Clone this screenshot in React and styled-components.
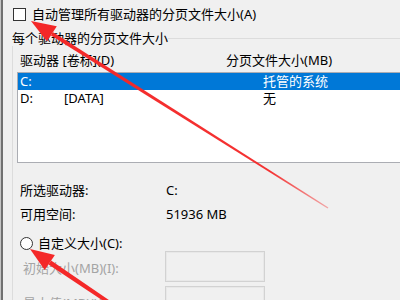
import React from "react";
import styled, { createGlobalStyle } from "styled-components";

const Global = createGlobalStyle`
  html, body { margin: 0; padding: 0; background: #f0f0f0; }
  * { box-sizing: border-box; }
`;

const Page = styled.div`
  position: relative;
  width: 400px;
  height: 300px;
  overflow: hidden;
  background: #f0f0f0;
  box-shadow: inset 1px 0 0 #c4c4c4, inset 3px 0 0 #707070;
  padding-top: 7px;
  font-family: "Noto Sans", "Noto Sans CJK SC", sans-serif;
  font-size: 13px;
  color: #000;
`;

const CheckRow = styled.div`
  display: flex;
  align-items: center;
  gap: 6px;
  margin-left: 13px;
  height: 15px;
  line-height: 15px;
  white-space: nowrap;
`;

const CheckBox = styled.span`
  width: 13px;
  height: 13px;
  border: 1px solid #333;
  background: #fff;
  flex: none;
`;

const Group = styled.fieldset`
  margin: 8px -80px 0 12px;
  padding: 0;
  border: 1px solid #dcdcdc;
  min-width: 0;
`;

const Legend = styled.legend`
  padding: 0;
  margin-left: -1px;
  line-height: 16px;
  white-space: nowrap;
`;

const HeaderRow = styled.div`
  display: flex;
  margin-top: 6px;
  padding-left: 7px;
  height: 16px;
  line-height: 16px;
  white-space: nowrap;
`;

const HeaderCol = styled.span`
  width: ${(p) => p.$w || "auto"};
  flex: none;
`;

const List = styled.div`
  margin: 4px 0 0 4px;
  height: 91px;
  border: 1px solid #abadb3;
  background: #fff;
`;

const ListRow = styled.div`
  display: grid;
  grid-template-columns: 44px 199px 1fr;
  height: 17px;
  line-height: 17px;
  padding-left: 2px;
  white-space: nowrap;
  background: ${(p) => (p.$selected ? "#0078d7" : "transparent")};
  color: ${(p) => (p.$selected ? "#fff" : "#000")};
`;

const InfoRow = styled.div`
  display: flex;
  padding-left: 7px;
  height: 18px;
  line-height: 18px;
  margin-top: ${(p) => p.$mt || 0}px;
  white-space: nowrap;
`;

const InfoLabel = styled.span`
  width: 146px;
  flex: none;
`;

const RadioRow = styled.div`
  display: flex;
  align-items: center;
  gap: 5px;
  margin-top: 12px;
  padding-left: 7px;
  height: 16px;
  line-height: 16px;
  white-space: nowrap;
`;

const Radio = styled.span`
  width: 13px;
  height: 13px;
  border-radius: 50%;
  border: 1px solid #333;
  background: #fff;
  flex: none;
`;

const FieldRow = styled.div`
  display: flex;
  align-items: center;
  padding-left: 10px;
  height: 31px;
  margin-top: ${(p) => p.$mt || 0}px;
  white-space: nowrap;
`;

const FieldLabel = styled.span`
  width: 142px;
  flex: none;
  color: #a4a4a4;
  line-height: 16px;
  padding-top: 2px;
`;

const Input = styled.span`
  width: 100px;
  height: 31px;
  border: 1px solid #d2d2d2;
  box-shadow: inset 0 0 0 1px #e8e8e8;
  background: #f0f0f0;
  flex: none;
`;

const Overlay = styled.svg`
  position: absolute;
  left: 0;
  top: 0;
  pointer-events: none;
`;

function Arrows() {
  return (
    <Overlay width="400" height="300" viewBox="0 0 400 300">
      <defs>
        <linearGradient id="fade1" x1="30" y1="20" x2="330" y2="209" gradientUnits="userSpaceOnUse">
          <stop offset="0" stopColor="#f42828" stopOpacity="1" />
          <stop offset="0.8" stopColor="#f42828" stopOpacity="0.95" />
          <stop offset="1" stopColor="#f42828" stopOpacity="0.35" />
        </linearGradient>
      </defs>
      <polygon points="31,21 47,41.5 56.8,26.3" fill="#f42828" />
      <polygon points="50.9,35.6 53.1,32.2 328.4,207.6 327.6,208.6" fill="url(#fade1)" />
      <polygon points="30,249 44.7,269.9 54.9,255.1" fill="#f42828" />
      <polygon points="48.5,264.5 51.1,260.5 111.2,301.6 108.8,304.6" fill="#f42828" />
    </Overlay>
  );
}

export default function App() {
  return (
    <>
      <Global />
      <Page>
        <CheckRow>
          <CheckBox />
          <span>自动管理所有驱动器的分页文件大小(A)</span>
        </CheckRow>
        <Group>
          <Legend>每个驱动器的分页文件大小</Legend>
          <HeaderRow>
            <HeaderCol $w="206px">驱动器 [卷标](D)</HeaderCol>
            <HeaderCol>分页文件大小(MB)</HeaderCol>
          </HeaderRow>
          <List>
            <ListRow $selected>
              <span>C:</span>
              <span></span>
              <span>托管的系统</span>
            </ListRow>
            <ListRow>
              <span>D:</span>
              <span>[DATA]</span>
              <span>无</span>
            </ListRow>
          </List>
          <InfoRow $mt={18}>
            <InfoLabel>所选驱动器:</InfoLabel>
            <span>C:</span>
          </InfoRow>
          <InfoRow $mt={6}>
            <InfoLabel>可用空间:</InfoLabel>
            <span>51936 MB</span>
          </InfoRow>
          <RadioRow>
            <Radio />
            <span>自定义大小(C):</span>
          </RadioRow>
          <FieldRow>
            <FieldLabel>初始大小(MB)(I):</FieldLabel>
            <Input />
          </FieldRow>
          <FieldRow $mt={4}>
            <FieldLabel>最大值(MB)(X):</FieldLabel>
            <Input />
          </FieldRow>
        </Group>
        <Arrows />
      </Page>
    </>
  );
}
